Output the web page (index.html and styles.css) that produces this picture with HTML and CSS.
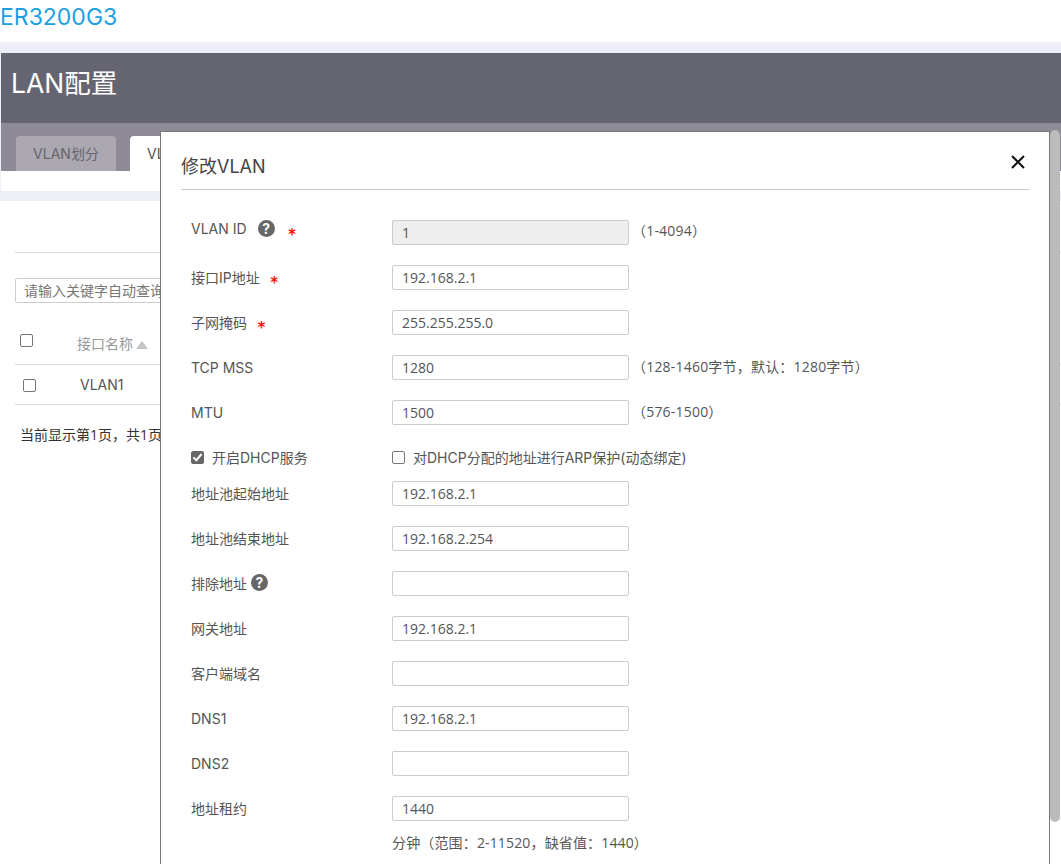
FILE: index.html
```html
<!DOCTYPE html>
<html lang="zh-CN">
<head>
    <meta charset="UTF-8">
    <meta name="viewport" content="width=device-width, initial-scale=1.0">
    <title>LAN配置</title>
    <link rel="stylesheet" href="styles.css">
</head>
<body>
    <div class="device-name">ER3200G3</div>

    <div class="panel-wrap">
        <div class="panel-title">LAN配置</div>
        <div class="tab-strip">
            <div class="tab">VLAN划分</div>
            <div class="tab active">VLAN设置</div>
        </div>
        <div class="tab-foot"></div>
    </div>

    <div class="list-area">
        <div class="list-rule"></div>
        <div class="search-box">请输入关键字自动查询</div>
        <div class="list-head">
            <span class="check"></span>
            <span class="col-name">接口名称<i class="sort-up"></i></span>
        </div>
        <div class="list-row">
            <span class="check"></span>
            <span class="col-value">VLAN1</span>
        </div>
        <div class="page-info">当前显示第1页，共1页</div>
    </div>

    <div class="modal">
        <div class="modal-head">
            <h2 class="modal-title">修改VLAN</h2>
            <svg class="modal-close" width="14" height="14" viewBox="0 0 14 14">
                <path d="M1 1 L13 13 M13 1 L1 13" stroke="#111" stroke-width="2" fill="none"></path>
            </svg>
        </div>

        <div class="form">
            <div class="form-row">
                <label class="form-label label-up">VLAN ID<span class="help">?</span><span class="req req-wide">*</span></label>
                <div class="text-input disabled">1</div>
                <span class="hint hint-up">（1-4094）</span>
            </div>
            <div class="form-row">
                <label class="form-label zh">接口IP地址<span class="req">*</span></label>
                <div class="text-input">192.168.2.1</div>
            </div>
            <div class="form-row">
                <label class="form-label zh">子网掩码<span class="req">*</span></label>
                <div class="text-input">255.255.255.0</div>
            </div>
            <div class="form-row">
                <label class="form-label">TCP MSS</label>
                <div class="text-input">1280</div>
                <span class="hint">（128-1460字节，默认：1280字节）</span>
            </div>
            <div class="form-row">
                <label class="form-label">MTU</label>
                <div class="text-input">1500</div>
                <span class="hint">（576-1500）</span>
            </div>
            <div class="form-row check-row">
                <label class="form-label"><span class="check checked"></span>开启DHCP服务</label>
                <label class="check-label"><span class="check"></span>对DHCP分配的地址进行ARP保护(动态绑定)</label>
            </div>
            <div class="form-row">
                <label class="form-label zh">地址池起始地址</label>
                <div class="text-input">192.168.2.1</div>
            </div>
            <div class="form-row">
                <label class="form-label zh">地址池结束地址</label>
                <div class="text-input">192.168.2.254</div>
            </div>
            <div class="form-row">
                <label class="form-label zh">排除地址<span class="help help-near">?</span></label>
                <div class="text-input"></div>
            </div>
            <div class="form-row">
                <label class="form-label zh">网关地址</label>
                <div class="text-input">192.168.2.1</div>
            </div>
            <div class="form-row">
                <label class="form-label zh">客户端域名</label>
                <div class="text-input"></div>
            </div>
            <div class="form-row">
                <label class="form-label">DNS1</label>
                <div class="text-input">192.168.2.1</div>
            </div>
            <div class="form-row">
                <label class="form-label">DNS2</label>
                <div class="text-input"></div>
            </div>
            <div class="form-row lease-row">
                <label class="form-label zh">地址租约</label>
                <div class="text-input">1440</div>
            </div>
            <div class="lease-hint">分钟（范围：2-11520，缺省值：1440）</div>
        </div>
    </div>

    <div class="scroll-thumb"></div>
</body>
</html>
```

FILE: styles.css
```css
html, body {
    height: 100%;
}

body {
    margin: 0;
    overflow: hidden;
    position: relative;
    background: #fff;
    color: #555;
    font-family: 'Inter', 'Noto Sans CJK SC', sans-serif;
    font-size: 14px;
}

.device-name {
    height: 42px;
    line-height: 34px;
    font-size: 23px;
    color: #1c9fe2;
}

.panel-wrap {
    background: #eeeef7;
    padding: 11px 0 10px 1px;
}

.panel-title {
    height: 70px;
    padding-left: 10px;
    line-height: 60px;
    font-size: 26.5px;
    color: #fff;
    background: #646570;
}

.tab-strip {
    display: flex;
    gap: 14px;
    height: 35px;
    padding: 13px 0 0 15px;
    background: #8e8b96;
}

.tab {
    width: 100px;
    line-height: 35px;
    text-align: center;
    color: #66636c;
    background: #aba8b2;
    border-radius: 4px 4px 0 0;
}

.tab.active {
    color: #555;
    background: #fff;
}

.tab-foot {
    height: 20px;
    background: #fff;
}

.list-area {
    padding: 51px 0 0 15px;
}

.list-rule {
    border-top: 1px solid #d8d8d8;
}

.search-box {
    width: 300px;
    height: 23px;
    margin-top: 25px;
    padding-left: 8px;
    line-height: 23px;
    color: #777;
    border: 1px solid #ccc;
    border-radius: 2px;
}

.list-head,
.list-row {
    display: flex;
    align-items: center;
    border-bottom: 1px solid #d8d8d8;
}

.list-head {
    height: 43px;
    padding-top: 18px;
}

.list-head .check {
    margin: 0 0 4px 5px;
}

.list-row {
    height: 39px;
}

.list-row .check {
    margin: 2px 0 0 8px;
}

.col-name {
    margin-left: 44px;
    color: #999;
}

.col-value {
    margin-left: 44px;
    color: #555;
}

.sort-up {
    display: inline-block;
    margin-left: 3px;
    border: 6px solid transparent;
    border-top: 0;
    border-bottom: 8px solid #c4c4c4;
}

.page-info {
    margin: 19px 0 0 5px;
    font-family: 'Open Sans', 'Noto Sans CJK SC', sans-serif;
    color: #333;
}

.check {
    display: inline-block;
    box-sizing: border-box;
    flex: none;
    position: relative;
    width: 13px;
    height: 13px;
    background: #fff;
    border: 1px solid #777;
    border-radius: 2px;
}

.check.checked {
    background: #666;
    border-color: #666;
}

.check.checked::after {
    content: "";
    position: absolute;
    left: 3px;
    top: 0;
    width: 3px;
    height: 7px;
    border: solid #fff;
    border-width: 0 2px 2px 0;
    transform: rotate(40deg);
}

.modal {
    position: absolute;
    left: 160px;
    top: 131px;
    right: 11px;
    bottom: -200px;
    background: #fff;
    border: 1px solid #777;
    border-bottom: 0;
}

.modal-head {
    display: flex;
    align-items: center;
    justify-content: space-between;
    height: 57px;
    margin: 0 20px;
    padding-right: 4px;
    border-bottom: 1px solid #ccc;
}

.modal-title {
    margin: 8px 0 0;
    font-size: 18px;
    font-weight: normal;
    color: #444;
}

.modal-close {
    margin-top: 2px;
}

.form {
    padding: 30px 0 0 30px;
}

.form-row {
    display: flex;
    align-items: center;
    height: 25px;
    margin-bottom: 20px;
}

.form-label {
    display: flex;
    align-items: center;
    flex: none;
    width: 201px;
    color: #555;
}

.form-label.zh {
    position: relative;
    top: -1px;
}

.label-up {
    position: relative;
    top: -4px;
}

.text-input {
    box-sizing: border-box;
    width: 237px;
    height: 25px;
    padding-left: 9px;
    line-height: 23px;
    font-family: 'Open Sans', 'Noto Sans CJK SC', sans-serif;
    background: #fff;
    border: 1px solid #ccc;
    border-radius: 2px;
}

.text-input.disabled {
    background: #eee;
}

.hint {
    position: relative;
    top: -2px;
    margin-left: 3px;
    font-family: 'Open Sans', 'Noto Sans CJK SC', sans-serif;
    letter-spacing: 0.2px;
}

.hint-up {
    top: -3px;
}

.help {
    display: inline-block;
    width: 17px;
    height: 17px;
    margin-left: 11px;
    line-height: 17px;
    text-align: center;
    font-size: 14px;
    font-weight: bold;
    color: #fff;
    background: #666;
    border-radius: 50%;
}

.help-near {
    margin-left: 4px;
}

.req {
    margin-left: 10px;
    line-height: 14px;
    position: relative;
    top: 7px;
    font-size: 18px;
    color: #f00;
}

.req-wide {
    margin-left: 13px;
}

.check-row {
    height: 26px;
    margin: -1px 0 11px;
}

.check-row .check {
    margin-right: 8px;
}

.check-label {
    display: flex;
    align-items: center;
}

.lease-row {
    margin-bottom: 11px;
}

.lease-hint {
    margin-left: 201px;
    padding-bottom: 40px;
    font-family: 'Open Sans', 'Noto Sans CJK SC', sans-serif;
    letter-spacing: 0.15px;
}

.scroll-thumb {
    position: absolute;
    left: 1050px;
    top: 130px;
    width: 10px;
    height: 692px;
    background: #bbb;
    border-radius: 5px;
}
```
